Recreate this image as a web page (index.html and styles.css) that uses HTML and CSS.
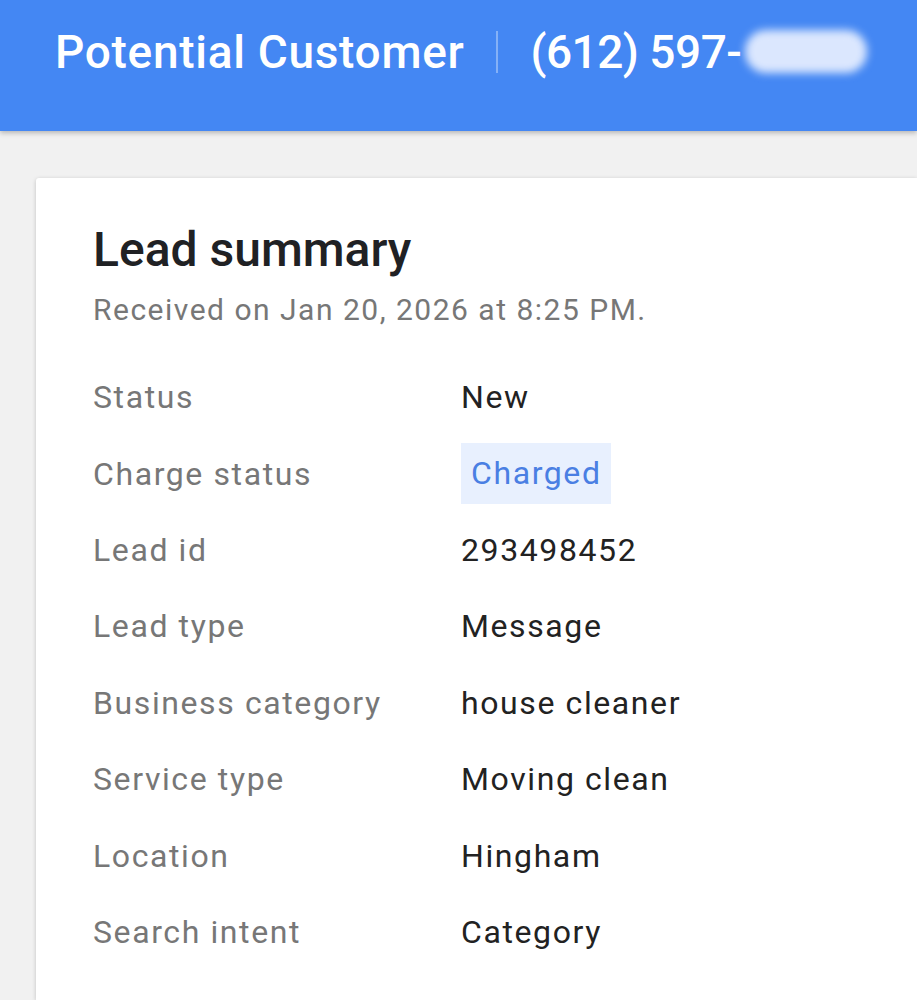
FILE: index.html
```html
<!DOCTYPE html>
<html>
<head>
<meta charset="utf-8">
<link rel="stylesheet" href="styles.css">
</head>
<body>
<header class="topbar">
  <span class="title">Potential Customer</span>
  <span class="divider"></span>
  <span class="phone">(612) 597-</span><span class="blur"></span>
</header>
<main class="content">
  <section class="card">
    <h1 class="card-title">Lead summary</h1>
    <p class="received">Received on Jan 20, 2026 at 8:25 PM.</p>
    <dl class="details">
      <div class="row"><dt>Status</dt><dd>New</dd></div>
      <div class="row"><dt>Charge status</dt><dd><span class="chip">Charged</span></dd></div>
      <div class="row"><dt>Lead id</dt><dd>293498452</dd></div>
      <div class="row"><dt>Lead type</dt><dd>Message</dd></div>
      <div class="row"><dt>Business category</dt><dd>house cleaner</dd></div>
      <div class="row"><dt>Service type</dt><dd>Moving clean</dd></div>
      <div class="row"><dt>Location</dt><dd>Hingham</dd></div>
      <div class="row"><dt>Search intent</dt><dd>Category</dd></div>
    </dl>
  </section>
</main>
</body>
</html>
```
FILE: styles.css
```css
html, body {
  margin: 0;
  padding: 0;
  background: #f1f1f1;
  font-family: Roboto, "Noto Sans", Arial, sans-serif;
  overflow: hidden;
}
.topbar {
  height: 131px;
  background: #4487f3;
  box-shadow: 0 2px 5px rgba(0,0,0,0.25);
  display: flex;
  align-items: center;
  padding: 0 0 28px 55px;
  box-sizing: border-box;
  color: #fff;
  position: relative;
  z-index: 1;
}
.title {
  font-size: 46px;
  font-weight: 500;
  letter-spacing: 0.7px;
}
.divider {
  width: 2px;
  height: 42px;
  background: rgba(255,255,255,0.35);
  margin: 0 32px 0 32px;
}
.phone {
  font-size: 46px;
  font-weight: 500;
  letter-spacing: -0.5px;
}
.blur {
  display: inline-block;
  width: 122px;
  height: 43px;
  border-radius: 21px;
  background: rgba(236, 242, 255, 0.9);
  filter: blur(4px);
  margin-left: 4px;
}
.content {
  padding: 47px 0 0 36px;
}
.card {
  background: #fff;
  box-shadow: 0 1px 4px rgba(0,0,0,0.2);
  border-radius: 3px 0 0 0;
  padding: 44px 0 0 57px;
  box-sizing: border-box;
  height: 822px;
}
.card-title {
  margin: 0;
  font-size: 48px;
  font-weight: 500;
  color: #202124;
  line-height: 56px;
}
.received {
  margin: 10px 0 0 0;
  font-size: 30px;
  letter-spacing: 1.5px;
  color: #777;
  line-height: 44px;
}
.details {
  margin: 27px 0 0 0;
}
.row {
  display: flex;
  align-items: center;
  height: 76.4px;
}
dt {
  width: 368px;
  font-size: 32px;
  letter-spacing: 1.6px;
  color: #777;
}
dd {
  margin: 0;
  font-size: 32px;
  letter-spacing: 1.6px;
  color: #222;
}
.chip {
  display: inline-block;
  background: #e8f0fe;
  color: #4a7fe3;
  padding: 11px 9px 12px 10px;
}
```
